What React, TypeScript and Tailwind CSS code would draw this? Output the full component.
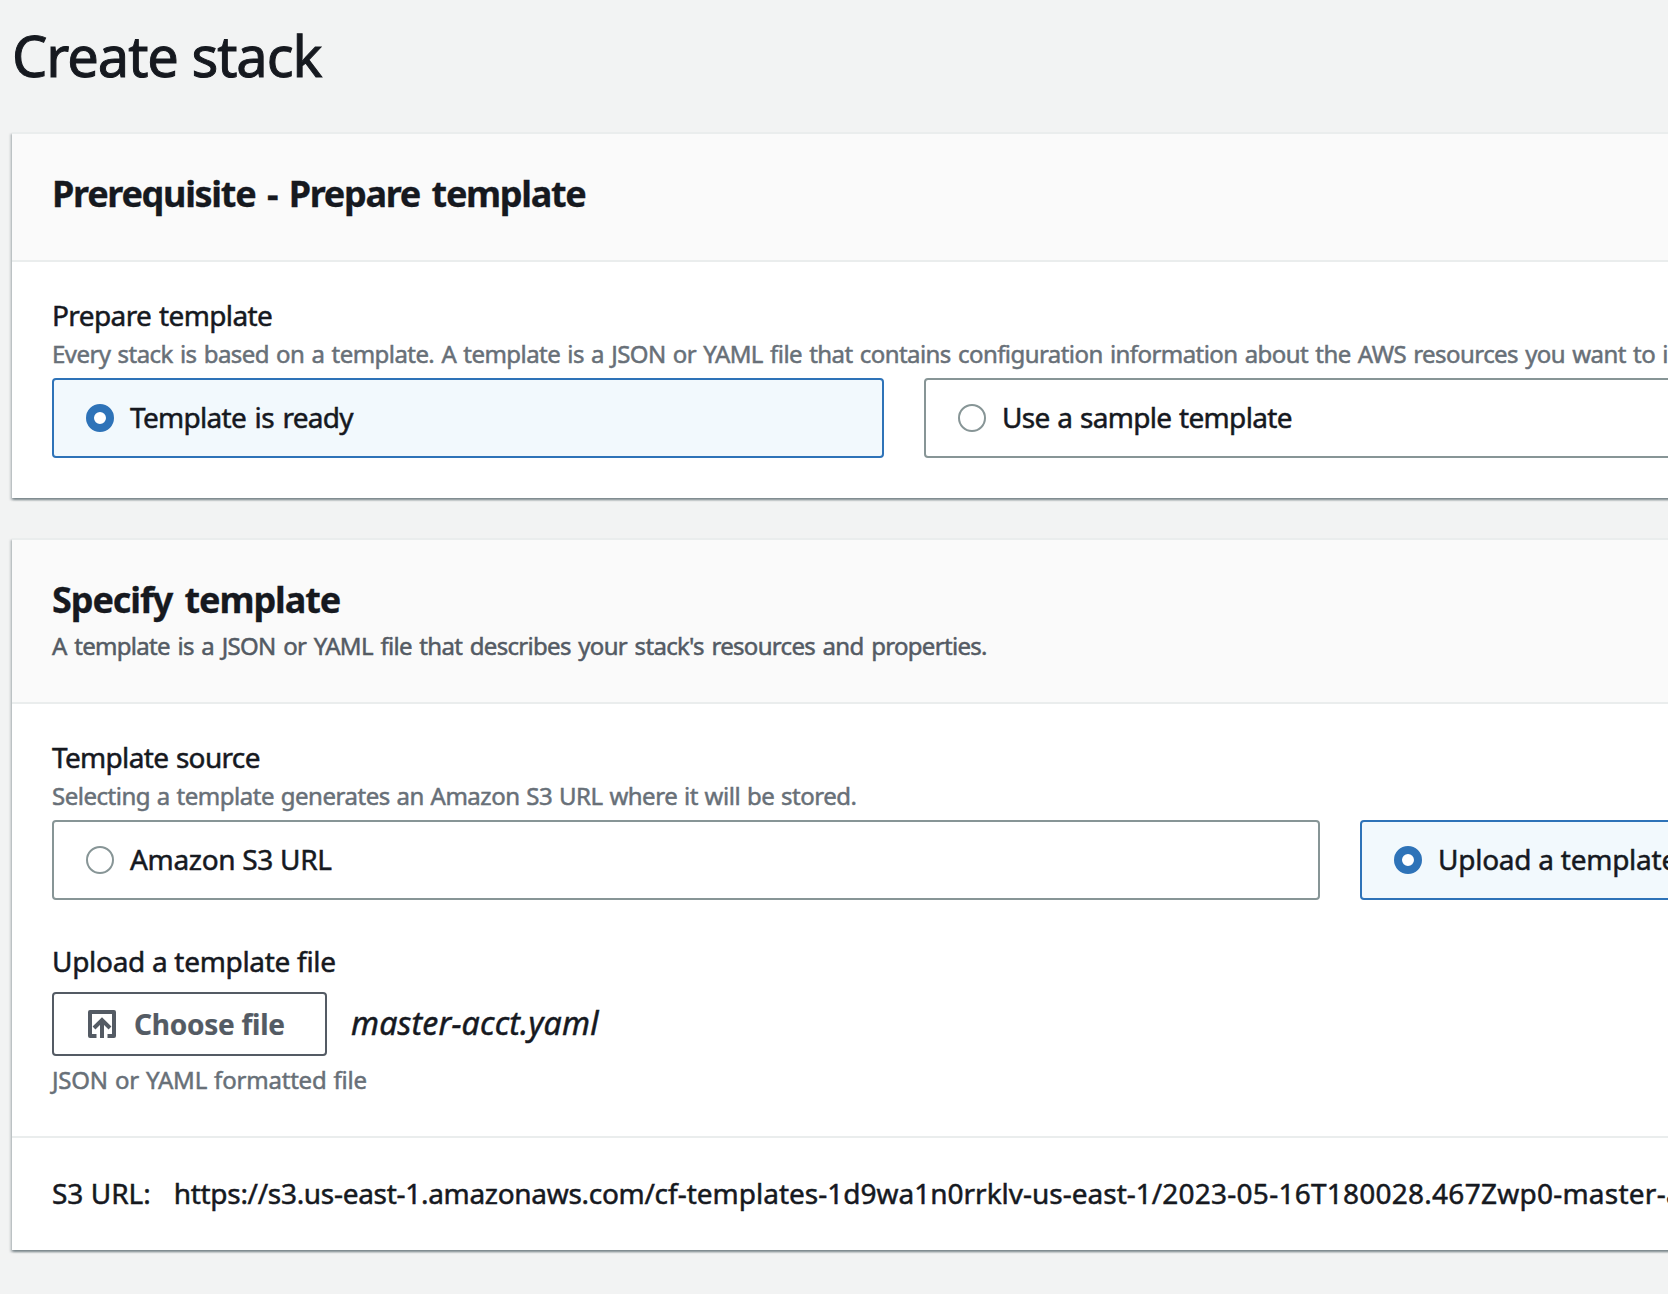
import type { ReactNode } from "react";

function Card({ children, className = "" }: { children: ReactNode; className?: string }) {
  return (
    <section
      className={`ml-3 w-[2600px] border-t-2 border-[#eaeded] bg-white shadow-[0_2px_2px_0_rgba(0,28,36,0.3),2px_2px_2px_0_rgba(0,28,36,0.15),-2px_2px_2px_0_rgba(0,28,36,0.15)] ${className}`}
    >
      {children}
    </section>
  );
}

function Tile({ label, selected = false, className = "" }: { label: string; selected?: boolean; className?: string }) {
  return (
    <label
      className={`flex h-20 shrink-0 items-center gap-4 rounded-sm border-2 px-8 text-[28px] leading-10 ${
        selected ? "border-[#2e73b8] bg-[#f2f9fd]" : "border-[#879596] bg-white"
      } ${className}`}
    >
      {selected ? (
        <span className="size-7 rounded-full border-8 border-[#2e73b8] bg-white" />
      ) : (
        <span className="size-7 rounded-full border-2 border-[#879596] bg-white" />
      )}
      <span className="pb-0.5">{label}</span>
    </label>
  );
}

function UploadIcon() {
  return (
    <svg viewBox="0 0 28 28" className="size-7" fill="none" stroke="currentColor" strokeWidth="4">
      <path d="M8.5 26H2V2h24v24h-6.5" strokeLinejoin="round" />
      <path d="M14 28V11M6 18l8-8 8 8" />
    </svg>
  );
}

export default function App() {
  return (
    <main className="h-[1294px] w-[1668px] overflow-hidden bg-[#f2f3f3] font-['Noto_Sans',sans-serif] whitespace-nowrap text-[#16191f] [-webkit-text-stroke:0.5px]">
      <h1 className="pt-[23px] pl-3 text-[56px] leading-[64px] tracking-[-1.05px] [-webkit-text-stroke:1px]">
        Create stack
      </h1>

      <Card className="mt-[45px]">
        <header className="h-[128px] border-b-2 border-[#eaeded] bg-[#fafafa] pt-[38px] pl-10">
          <h2 className="text-[36px] leading-[44px] font-bold tracking-[-1.3px] [word-spacing:3.5px] [-webkit-text-stroke:0.3px]">
            Prerequisite - Prepare template
          </h2>
        </header>
        <div className="px-10 pt-9 pb-10">
          <h3 className="text-[28px] leading-[34px] tracking-[-0.6px] [word-spacing:1px]">Prepare template</h3>
          <p className="text-2xl leading-[44px] tracking-[-0.56px] [word-spacing:1.5px] text-[#687078]">
            Every stack is based on a template. A template is a JSON or YAML file that contains configuration information
            about the AWS resources you want to include in the stack.
          </p>
          <div className="mt-0.5 flex gap-10">
            <Tile label="Template is ready" selected className="w-[832px] tracking-[-0.7px] [word-spacing:2px]" />
            <Tile label="Use a sample template" className="w-[832px] tracking-[-0.67px] [word-spacing:1px]" />
          </div>
        </div>
      </Card>

      <Card className="mt-10">
        <header className="h-[164px] border-b-2 border-[#eaeded] bg-[#fafafa] pt-[38px] pl-10">
          <h2 className="text-[36px] leading-[44px] font-bold tracking-[-1.1px] [word-spacing:4px] [-webkit-text-stroke:0.3px]">
            Specify template
          </h2>
          <p className="mt-1 text-2xl leading-10 tracking-[-0.69px] [word-spacing:2px] text-[#545b64]">
            A template is a JSON or YAML file that describes your stack's resources and properties.
          </p>
        </header>
        <div className="px-10 pt-9 pb-9">
          <h3 className="text-[28px] leading-[34px] tracking-[-0.67px] [word-spacing:1px]">Template source</h3>
          <p className="text-2xl leading-[44px] tracking-[-0.48px] [word-spacing:1px] text-[#687078]">
            Selecting a template generates an Amazon S3 URL where it will be stored.
          </p>
          <div className="mt-0.5 flex gap-10">
            <Tile label="Amazon S3 URL" className="w-[1268px] tracking-[-0.31px]" />
            <Tile label="Upload a template file" selected className="w-[1212px] tracking-[-0.25px]" />
          </div>
          <h3 className="mt-11 text-[28px] leading-[34px] tracking-[-0.3px]">Upload a template file</h3>
          <div className="mt-3.5 flex items-center gap-6">
            <button className="flex h-16 w-[275px] items-center gap-[18px] rounded-sm border-2 border-[#545b64] pl-[34px] text-[28px] leading-10 font-bold tracking-[-0.25px] text-[#545b64] [-webkit-text-stroke:0.2px]">
              <UploadIcon />
              <span>Choose file</span>
            </button>
            <span className="pb-0.5 text-[32px] leading-10 tracking-[0.18px] italic">master-acct.yaml</span>
          </div>
          <p className="mt-1 text-2xl leading-10 tracking-[-0.2px] [word-spacing:1px] text-[#687078]">
            JSON or YAML formatted file
          </p>
        </div>
        <footer className="flex h-[114px] items-center gap-[23px] border-t-2 border-[#eaeded] px-10 pb-0.5 text-[28px] leading-10">
          <span>S3 URL:</span>
          <span>
            <span className="tracking-[-0.3px]">https://s3.us-east-1.amazonaws.com/</span>
            <span>cf-templates-1d9wa1n0rrklv-us-east-1/</span>
            <span className="tracking-[0.25px]">2023-05-16T180028.467Zwp0-master-acct.yaml</span>
          </span>
        </footer>
      </Card>
    </main>
  );
}
